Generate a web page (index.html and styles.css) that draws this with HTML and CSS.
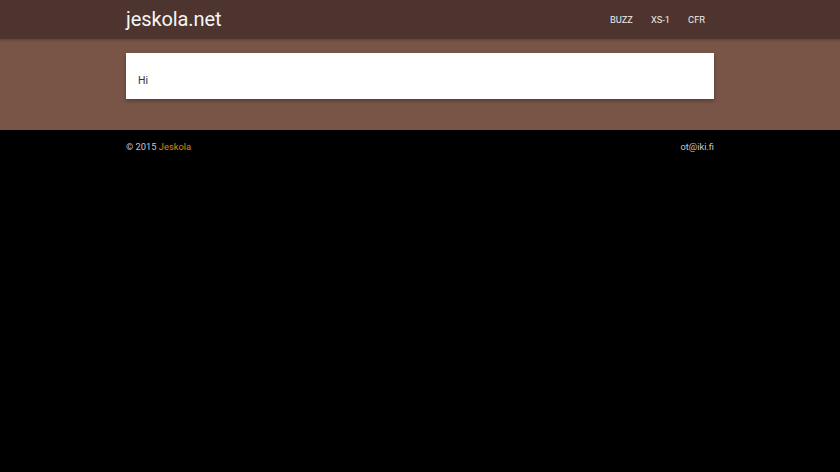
FILE: index.html
```html
<!DOCTYPE html>
<html lang="en">
<head>
    <meta charset="UTF-8">
    <title>jeskola.net</title>
    <link rel="stylesheet" href="styles.css">
</head>
<body>
    <nav class="topbar">
        <div class="container nav-inner">
            <a class="brand" href="#">jeskola.net</a>
            <ul class="menu">
                <li><a href="#">BUZZ</a></li>
                <li><a href="#">XS-1</a></li>
                <li><a href="#">CFR</a></li>
            </ul>
        </div>
    </nav>

    <main class="main">
        <div class="container">
            <div class="card">Hi</div>
        </div>
    </main>

    <footer class="footer">
        <div class="container footer-inner">
            <span>&copy; 2015 <a class="orange" href="#">Jeskola</a></span>
            <span>ot@iki.fi</span>
        </div>
    </footer>
</body>
</html>
```

FILE: styles.css
```css
html, body {
    margin: 0;
    height: 100%;
}

body {
    font-family: Roboto, "Liberation Sans", sans-serif;
    background-color: #000;
    color: #fff;
}

a {
    text-decoration: none;
    color: inherit;
}

.container {
    width: 70%;
    margin: 0 auto;
}

.topbar {
    background-color: #4e342e;
    height: 39px;
    box-shadow: 0 1px 3px rgba(0, 0, 0, 0.25);
    position: relative;
}

.nav-inner {
    display: flex;
    justify-content: space-between;
    align-items: center;
    height: 100%;
}

.brand {
    font-size: 20px;
    letter-spacing: -0.1px;
    color: #f5f5f5;
    margin-top: -1px;
}

.menu {
    list-style: none;
    display: flex;
    margin: 0;
    padding: 0;
}

.menu a {
    display: block;
    padding: 0 9px;
    font-size: 9.3px;
    color: #f0ebea;
}

.menu li:first-child a {
    padding-left: 0;
}

.main {
    background-color: #795548;
    padding: 14px 0 31px;
}

.card {
    background-color: #fff;
    color: #333;
    font-size: 10.5px;
    height: 28px;
    line-height: 20px;
    padding: 18px 12px 0;
    box-shadow: 0 2px 4px rgba(0, 0, 0, 0.3);
}

.footer {
    padding: 11px 0 10px;
}

.footer-inner {
    display: flex;
    justify-content: space-between;
    font-size: 9.3px;
    color: #c8c8c8;
}

.orange {
    color: #e68400;
}
```
